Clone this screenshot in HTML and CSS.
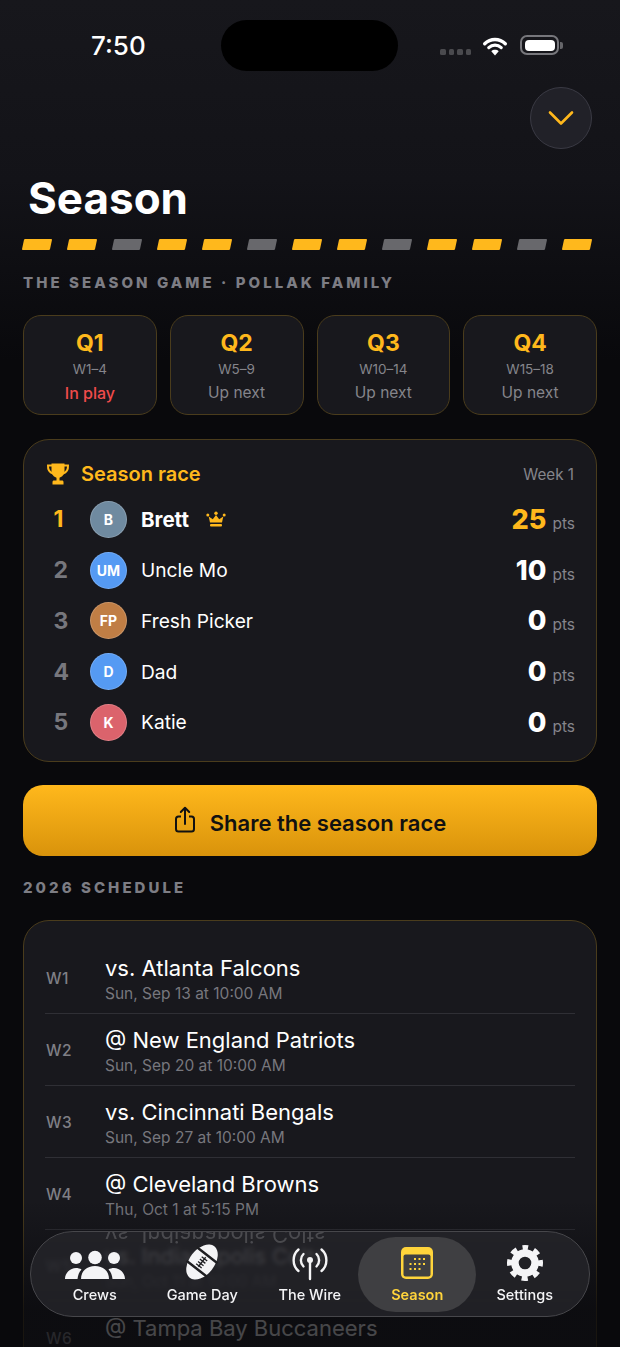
FILE: index.html
```html
<!DOCTYPE html>
<html lang="en">
<head>
    <meta charset="UTF-8">
    <meta name="viewport" content="width=device-width, initial-scale=1.0">
    <title>Season</title>
    <link rel="stylesheet" href="styles.css">
</head>
<body>
    <div class="screen">
        <div class="status-bar">
            <div class="clock">7:50</div>
            <div class="island"></div>
            <div class="status-icons">
                <div class="signal"><i></i><i></i><i></i><i></i></div>
                <svg class="wifi" width="28" height="21" viewBox="0 0 28 21">
                    <path d="M14 4.5c4 0 7.6 1.6 10.3 4.2M3.700 8.700C6.400 6.100 10 4.500 14 4.500" fill="none" stroke="#fff" stroke-width="3.400" stroke-linecap="round"/>
                    <path d="M7.800 12.600c1.600-1.500 3.800-2.500 6.200-2.500s4.600 1 6.200 2.500" fill="none" stroke="#fff" stroke-width="3.200" stroke-linecap="round"/>
                    <path d="M10.300 16.200c1-.9 2.300-1.400 3.700-1.400s2.700.5 3.700 1.400L14 20.400z" fill="#fff"/>
                </svg>
                <div class="battery"><div class="battery-fill"></div></div>
                <div class="battery-nub"></div>
            </div>
        </div>

        <div class="top-action">
            <div class="round-btn">
                <svg width="26" height="16" viewBox="0 0 26 16"><path d="M2 2.500l11 11 11-11" fill="none" stroke="#ffb81c" stroke-width="2.600" stroke-linecap="round" stroke-linejoin="round"/></svg>
            </div>
        </div>

        <h1>Season</h1>

        <div class="stripes">
            <span></span><span></span><span class="grey"></span>
            <span></span><span></span><span class="grey"></span>
            <span></span><span></span><span class="grey"></span>
            <span></span><span></span><span class="grey"></span>
            <span></span>
        </div>

        <div class="label">THE SEASON GAME · POLLAK FAMILY</div>

        <div class="quarters">
            <div class="quarter">
                <div class="q-name">Q1</div>
                <div class="q-weeks">W1–4</div>
                <div class="q-state live">In play</div>
            </div>
            <div class="quarter">
                <div class="q-name">Q2</div>
                <div class="q-weeks">W5–9</div>
                <div class="q-state">Up next</div>
            </div>
            <div class="quarter">
                <div class="q-name">Q3</div>
                <div class="q-weeks">W10–14</div>
                <div class="q-state">Up next</div>
            </div>
            <div class="quarter">
                <div class="q-name">Q4</div>
                <div class="q-weeks">W15–18</div>
                <div class="q-state">Up next</div>
            </div>
        </div>

        <div class="card race">
            <div class="race-head">
                <svg class="trophy" width="24" height="24" viewBox="0 0 24 24">
                    <path d="M5.500 1.500h13v7.500c0 3.400-2.400 6-5 6.700v2.800h2.500c1 0 1.500.7 1.500 1.500v2.500H6.500V20c0-.8.500-1.500 1.500-1.500h2.500v-2.800c-2.600-.7-5-3.300-5-6.700z" fill="#ffb81c"/>
                    <path d="M6 3.500H2C1.800 7.500 3.500 10.500 7 11.500M18 3.500h4c.2 4-1.500 7-5 8" fill="none" stroke="#ffb81c" stroke-width="2"/>
                </svg>
                <div class="race-title">Season race</div>
                <div class="race-week">Week 1</div>
            </div>

            <div class="race-row leader">
                <div class="rank">1</div>
                <div class="avatar slate">B</div>
                <div class="player">Brett</div>
                <svg class="crown" width="20" height="16" viewBox="0 0 20 16">
                    <path d="M10 4l3.200 4.300L17.300 5.500 16 11.500H4L2.700 5.500l4.100 2.800z" fill="#ffb81c"/>
                    <circle cx="10" cy="2.200" r="1.700" fill="#ffb81c"/>
                    <circle cx="1.800" cy="4" r="1.500" fill="#ffb81c"/>
                    <circle cx="18.200" cy="4" r="1.500" fill="#ffb81c"/>
                    <rect x="4" y="13" width="12" height="2.600" rx="1" fill="#ffb81c"/>
                </svg>
                <div class="score"><b>25</b><span>pts</span></div>
            </div>
            <div class="race-row">
                <div class="rank">2</div>
                <div class="avatar blue">UM</div>
                <div class="player">Uncle Mo</div>
                <div class="score"><b>10</b><span>pts</span></div>
            </div>
            <div class="race-row">
                <div class="rank">3</div>
                <div class="avatar copper">FP</div>
                <div class="player">Fresh Picker</div>
                <div class="score"><b>0</b><span>pts</span></div>
            </div>
            <div class="race-row">
                <div class="rank">4</div>
                <div class="avatar blue">D</div>
                <div class="player">Dad</div>
                <div class="score"><b>0</b><span>pts</span></div>
            </div>
            <div class="race-row">
                <div class="rank">5</div>
                <div class="avatar rose">K</div>
                <div class="player">Katie</div>
                <div class="score"><b>0</b><span>pts</span></div>
            </div>
        </div>

        <div class="share-btn">
            <svg width="22" height="28" viewBox="0 0 22 28">
                <path d="M7 10.500H4.500C3 10.500 2 11.500 2 13v10c0 1.500 1 2.500 2.500 2.500h13c1.500 0 2.500-1 2.500-2.500V13c0-1.500-1-2.500-2.500-2.500H15" fill="none" stroke="#111" stroke-width="2"/>
                <path d="M11 18V2M6.800 6L11 1.800 15.200 6" fill="none" stroke="#111" stroke-width="2" stroke-linecap="round" stroke-linejoin="round"/>
            </svg>
            Share the season race
        </div>

        <div class="label schedule-label">2026 SCHEDULE</div>

        <div class="card schedule">
            <div class="game">
                <div class="game-week">W1</div>
                <div>
                    <div class="game-title">vs. Atlanta Falcons</div>
                    <div class="game-time">Sun, Sep 13 at 10:00 AM</div>
                </div>
            </div>
            <div class="game">
                <div class="game-week">W2</div>
                <div>
                    <div class="game-title">@ New England Patriots</div>
                    <div class="game-time">Sun, Sep 20 at 10:00 AM</div>
                </div>
            </div>
            <div class="game">
                <div class="game-week">W3</div>
                <div>
                    <div class="game-title">vs. Cincinnati Bengals</div>
                    <div class="game-time">Sun, Sep 27 at 10:00 AM</div>
                </div>
            </div>
            <div class="game">
                <div class="game-week">W4</div>
                <div>
                    <div class="game-title">@ Cleveland Browns</div>
                    <div class="game-time">Thu, Oct 1 at 5:15 PM</div>
                </div>
            </div>
            <div class="game">
                <div class="game-week">W5</div>
                <div>
                    <div class="game-title">vs. Indianapolis Colts</div>
                    <div class="game-time">Sun, Oct 11 at 10:00 AM</div>
                </div>
            </div>
            <div class="game">
                <div class="game-week">W6</div>
                <div>
                    <div class="game-title">@ Tampa Bay Buccaneers</div>
                    <div class="game-time"></div>
                </div>
            </div>
        </div>

        <div class="bottom-fade"></div>

        <div class="tab-bar">
            <div class="reflection" aria-hidden="true">vs. Indianapolis Colts</div>
            <div class="tab">
                <svg width="62" height="36" viewBox="0 0 62 36">
                    <circle cx="12" cy="13" r="6" fill="#f4f4f6"/>
                    <circle cx="31" cy="12.500" r="6.800" fill="#f4f4f6"/>
                    <circle cx="50" cy="13" r="6" fill="#f4f4f6"/>
                    <path d="M1 34c0-6 5-11 11-11 2 0 4 .5 5.500 1.500-2.500 2.500-3.500 5.500-4 9.500z" fill="#f4f4f6"/>
                    <path d="M61 34c0-6-5-11-11-11-2 0-4 .5-5.500 1.500 2.500 2.500 3.500 5.500 4 9.500z" fill="#f4f4f6"/>
                    <path d="M17 34c0-8 6-13 14-13s14 5 14 13z" fill="#f4f4f6"/>
                </svg>
                <div class="tab-name">Crews</div>
            </div>
            <div class="tab">
                <svg width="36" height="38" viewBox="0 0 36 38">
                    <g transform="rotate(38 18 19)">
                        <ellipse cx="18" cy="19" rx="12.500" ry="20" fill="#f4f4f6"/>
                        <path d="M5 10.500h26M5 27.500h26" stroke="#1f1f22" stroke-width="2.400"/>
                        <path d="M18 13v12M14.500 15h7M14.500 18h7M14.500 21h7M14.500 24h7" stroke="#1f1f22" stroke-width="1.300"/>
                    </g>
                </svg>
                <div class="tab-name">Game Day</div>
            </div>
            <div class="tab">
                <svg width="36" height="36" viewBox="0 0 36 36">
                    <path d="M6.500 4.500C0 10 0 20.500 6.500 26M29.500 4.500C36 10 36 20.500 29.500 26" fill="none" stroke="#f4f4f6" stroke-width="2.400" stroke-linecap="round"/>
                    <path d="M11.500 9c-3.500 3.300-3.500 9 0 12.500M24.500 9c3.500 3.300 3.500 9 0 12.500" fill="none" stroke="#f4f4f6" stroke-width="2.400" stroke-linecap="round"/>
                    <circle cx="18" cy="15" r="3" fill="#f4f4f6"/>
                    <path d="M18 16v18" stroke="#f4f4f6" stroke-width="2.400" stroke-linecap="round"/>
                </svg>
                <div class="tab-name">The Wire</div>
            </div>
            <div class="tab current">
                <svg width="34" height="36" viewBox="0 0 34 36">
                    <rect x="1" y="2" width="32" height="32" rx="5" fill="#ffd43b"/>
                    <rect x="3.500" y="9.500" width="27" height="22" rx="2" fill="#3f3f42"/>
                    <g fill="#ffd43b">
                        <rect x="14" y="13" width="2" height="2"/><rect x="18.500" y="13" width="2" height="2"/><rect x="23" y="13" width="2" height="2"/>
                        <rect x="9.500" y="18" width="2" height="2"/><rect x="14" y="18" width="2" height="2"/><rect x="18.500" y="18" width="2" height="2"/><rect x="23" y="18" width="2" height="2"/>
                        <rect x="9.500" y="23" width="2" height="2"/><rect x="14" y="23" width="2" height="2"/><rect x="18.500" y="23" width="2" height="2"/>
                    </g>
                </svg>
                <div class="tab-name">Season</div>
            </div>
            <div class="tab">
                <svg width="36" height="36" viewBox="0 0 24 24">
                    <circle cx="12" cy="12" r="6.700" fill="none" stroke="#f4f4f6" stroke-width="5"/>
                    <circle cx="12" cy="12" r="10" fill="none" stroke="#f4f4f6" stroke-width="4" stroke-dasharray="4 3.854" stroke-dashoffset="2" transform="rotate(-90 12 12)"/>
                </svg>
                <div class="tab-name">Settings</div>
            </div>
        </div>
    </div>
</body>
</html>
```

FILE: styles.css
```css
body {
    margin: 0;
    background-color: #09090c;
    color: #fff;
    font-family: Inter, 'Liberation Sans', sans-serif;
}

.screen {
    position: relative;
    box-sizing: border-box;
    width: 620px;
    height: 1347px;
    padding: 20px 23px 0;
    overflow: hidden;
    background: linear-gradient(#17171c 0, #131318 180px, #09090c 360px, #09090c 100%);
}

/* status bar */
.status-bar {
    display: flex;
    align-items: center;
    height: 51px;
}

.clock {
    width: 198px;
    padding-left: 68px;
    box-sizing: border-box;
    font-size: 26px;
    font-weight: 500;
}

.island {
    width: 177px;
    height: 51px;
    border-radius: 26px;
    background-color: #000;
}

.status-icons {
    display: flex;
    align-items: center;
    margin-left: 42px;
    padding-bottom: 1px;
}

.signal {
    display: flex;
    gap: 3px;
    margin-top: 14px;
    margin-right: 10px;
}

.signal i {
    width: 5.500px;
    height: 5.500px;
    border-radius: 1.500px;
    background-color: #4a4a4e;
}

.wifi {
    margin-right: 11px;
}

.battery {
    box-sizing: border-box;
    width: 39px;
    height: 20px;
    padding: 2.500px;
    border: 2px solid #77777c;
    border-radius: 7px;
}

.battery-fill {
    height: 100%;
    border-radius: 4px;
    background-color: #fff;
}

.battery-nub {
    width: 3px;
    height: 7px;
    margin-left: 1px;
    border-radius: 0 2px 2px 0;
    background-color: #66666a;
}

/* header */
.top-action {
    display: flex;
    justify-content: flex-end;
    margin-top: 16px;
    padding-right: 5px;
}

.round-btn {
    box-sizing: border-box;
    display: flex;
    align-items: center;
    justify-content: center;
    width: 62px;
    height: 62px;
    border: 1px solid #3a3a44;
    border-radius: 50%;
    background-color: #212128;
}

h1 {
    margin: 24px 0 0 5px;
    font-size: 44px;
    line-height: 50px;
    font-weight: 700;
}

.stripes {
    display: flex;
    justify-content: space-between;
    width: 568px;
    margin-top: 16px;
}

.stripes span {
    width: 28px;
    height: 11px;
    border-radius: 1px;
    background-color: #ffb81c;
    transform: skewX(-12deg);
}

.stripes .grey {
    background-color: #68686c;
}

.label {
    margin-top: 24px;
    font-size: 15px;
    line-height: 17px;
    font-weight: 800;
    letter-spacing: 3.050px;
    color: #7d7d84;
}

/* quarter tiles */
.quarters {
    display: grid;
    grid-template-columns: repeat(4, 1fr);
    gap: 13px;
    margin-top: 24px;
}

.quarter {
    box-sizing: border-box;
    height: 100px;
    padding-top: 14px;
    border: 1px solid #4a3c1c;
    border-radius: 18px;
    background-color: #18181d;
    text-align: center;
}

.q-name {
    font-size: 23px;
    line-height: 26px;
    font-weight: 700;
    color: #ffb81c;
}

.q-weeks {
    margin-top: 5px;
    font-size: 13.500px;
    line-height: 16px;
    color: #85858b;
}

.q-state {
    margin-top: 6px;
    font-size: 15.500px;
    line-height: 20px;
    color: #85858b;
}

.q-state.live {
    font-size: 16px;
    font-weight: 500;
    color: #f04b4b;
}

/* season race */
.card {
    box-sizing: border-box;
    border: 1px solid #4a3c1c;
    border-radius: 26px;
    background-color: #18181d;
}

.race {
    height: 323px;
    margin-top: 24px;
    padding: 21px 22px 0;
}

.race-head {
    display: flex;
    align-items: center;
    height: 26px;
}

.trophy {
    margin-right: 11px;
}

.race-title {
    flex: 1;
    font-size: 20px;
    font-weight: 600;
    color: #ffb81c;
}

.race-week {
    font-size: 15.200px;
    color: #85858b;
}

.race-row {
    display: flex;
    align-items: center;
    height: 50.750px;
}

.race-head + .race-row {
    margin-top: 7px;
}

.rank {
    width: 30px;
    padding-left: 7.500px;
    box-sizing: border-box;
    font-size: 23px;
    font-weight: 700;
    color: #77777d;
}

.leader .rank {
    color: #ffb81c;
}

.avatar {
    box-sizing: border-box;
    display: flex;
    align-items: center;
    justify-content: center;
    width: 37px;
    height: 37px;
    margin-left: 14px;
    border: 1.500px solid rgba(255, 255, 255, 0.18);
    border-radius: 50%;
    font-size: 14px;
    font-weight: 700;
}

.slate { background-color: #6f8aa0; }
.blue { background-color: #559af3; }
.copper { background-color: #c07e45; }
.rose { background-color: #db636c; }

.player {
    margin-left: 14px;
    font-size: 19.200px;
}

.leader .player {
    font-size: 20.500px;
    font-weight: 700;
}

.crown {
    margin-left: 17px;
}

.score {
    display: flex;
    align-items: baseline;
    gap: 6px;
    margin-left: auto;
    margin-right: -1px;
}

.score b {
    font-size: 27px;
    font-weight: 800;
}

.leader .score b {
    color: #ffb81c;
}

.score span {
    font-size: 15.500px;
    color: #85858b;
}

/* share */
.share-btn {
    box-sizing: border-box;
    display: flex;
    align-items: center;
    justify-content: center;
    gap: 14px;
    height: 71px;
    margin-top: 23px;
    padding-top: 4px;
    border-radius: 20px;
    background: linear-gradient(#ffb81c, #d9930b);
    font-size: 22px;
    font-weight: 600;
    color: #111;
}

.share-btn svg {
    margin-top: -6px;
}

.schedule-label {
    margin-top: 23px;
}

/* schedule */
.schedule {
    margin-top: 24px;
    padding: 21px 21px 0;
}

.game {
    display: flex;
    align-items: center;
    height: 72px;
    padding-top: 2px;
    border-bottom: 1px solid #2f2f35;
    box-sizing: border-box;
}

.game-week {
    width: 59px;
    padding-left: 1px;
    font-size: 15.500px;
    font-weight: 500;
    letter-spacing: 0.5px;
    color: #7f7f85;
}

.game-title {
    font-size: 22px;
    line-height: 28px;
}

.game-time {
    min-height: 20px;
    margin-top: 2px;
    font-size: 15.500px;
    line-height: 20px;
    color: #77777d;
}

/* tab bar */
.bottom-fade {
    position: absolute;
    left: 0;
    right: 0;
    top: 1200px;
    bottom: 0;
    background: linear-gradient(rgba(9, 9, 12, 0), rgba(9, 9, 12, 0.75) 110px);
}

.tab-bar {
    position: absolute;
    left: 30px;
    top: 1231px;
    box-sizing: border-box;
    display: grid;
    grid-template-columns: repeat(5, 107.500px);
    align-items: center;
    width: 560px;
    height: 86px;
    padding: 5px 0 5px 10px;
    overflow: hidden;
    border: 1px solid #47474b;
    border-radius: 43px;
    background-color: rgba(38, 38, 42, 0.8);
    backdrop-filter: blur(2px);
}

.reflection {
    position: absolute;
    left: 74px;
    top: -8px;
    font-size: 22px;
    line-height: 22px;
    color: #66666a;
    transform: scaleY(-1);
    filter: blur(0.7px);
    opacity: 0.6;
}

.tab {
    position: relative;
    display: flex;
    flex-direction: column;
    align-items: center;
    justify-content: flex-end;
    height: 75px;
    padding-bottom: 9px;
    box-sizing: border-box;
}

.tab.current {
    margin: 0 -5.250px;
    border-radius: 38px;
    background-color: #3f3f42;
}

.tab-name {
    margin-top: 5px;
    font-size: 14.500px;
    line-height: 17px;
    font-weight: 500;
    color: #f4f4f6;
}

.current .tab-name {
    font-weight: 600;
    color: #ffd43b;
}
```
